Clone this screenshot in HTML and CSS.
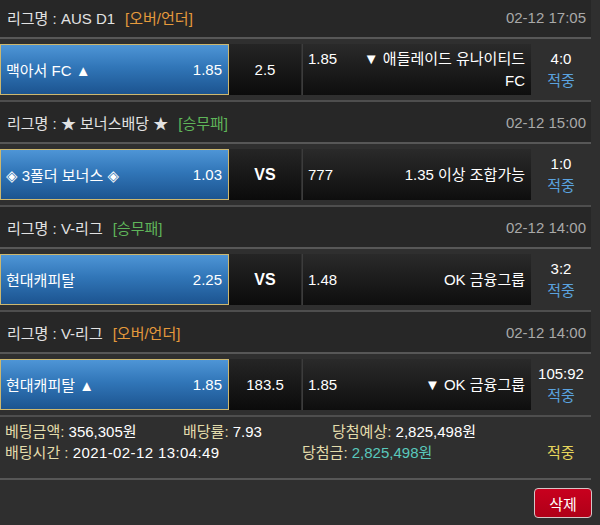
FILE: index.html
```html
<!DOCTYPE html>
<html lang="ko">
<head>
<meta charset="utf-8">
<title>베팅내역</title>
<link rel="stylesheet" href="styles.css">
</head>
<body>
<div class="slip">
  <div class="block">
    <div class="league"><span class="name">리그명 : AUS D1<span class="tag ou">[오버/언더]</span></span><span class="date">02-12 17:05</span></div>
    <div class="match">
      <div class="home"><span>맥아서 FC ▲</span><span>1.85</span></div>
      <div class="mid">2.5</div>
      <div class="away"><div class="away-in"><span class="odd">1.85</span><span class="team">▼ 애들레이드 유나이티드 FC</span></div></div>
      <div class="result"><span class="score">4:0</span><span class="hit">적중</span></div>
    </div>
  </div>
  <div class="block">
    <div class="league"><span class="name">리그명 : ★ 보너스배당 ★<span class="tag wdl">[승무패]</span></span><span class="date">02-12 15:00</span></div>
    <div class="match">
      <div class="home"><span>◈ 3폴더 보너스 ◈</span><span>1.03</span></div>
      <div class="mid vs">VS</div>
      <div class="away"><div class="away-in"><span class="odd">777</span><span class="team">1.35 이상 조합가능</span></div></div>
      <div class="result"><span class="score">1:0</span><span class="hit">적중</span></div>
    </div>
  </div>
  <div class="block">
    <div class="league"><span class="name">리그명 : V-리그<span class="tag wdl">[승무패]</span></span><span class="date">02-12 14:00</span></div>
    <div class="match">
      <div class="home"><span>현대캐피탈</span><span>2.25</span></div>
      <div class="mid vs">VS</div>
      <div class="away"><div class="away-in"><span class="odd">1.48</span><span class="team">OK 금융그룹</span></div></div>
      <div class="result"><span class="score">3:2</span><span class="hit">적중</span></div>
    </div>
  </div>
  <div class="block last">
    <div class="league"><span class="name">리그명 : V-리그<span class="tag ou">[오버/언더]</span></span><span class="date">02-12 14:00</span></div>
    <div class="match">
      <div class="home"><span>현대캐피탈 ▲</span><span>1.85</span></div>
      <div class="mid">183.5</div>
      <div class="away"><div class="away-in"><span class="odd">1.85</span><span class="team">▼ OK 금융그룹</span></div></div>
      <div class="result"><span class="score">105:92</span><span class="hit">적중</span></div>
    </div>
  </div>
  <div class="summary">
    <div class="line">
      <span class="c1"><span class="lbl">베팅금액:</span> 356,305원</span>
      <span class="c2"><span class="lbl">배당률:</span> 7.93</span>
      <span><span class="lbl">당첨예상:</span> 2,825,498원</span>
    </div>
    <div class="line">
      <span class="d1"><span class="lbl">배팅시간 :</span> <span class="dt">2021-02-12 13:04:49</span></span>
      <span class="d2"><span class="lbl">당첨금:</span> <span class="win">2,825,498원</span></span>
      <span class="status">적중</span>
    </div>
  </div>
  <div class="actions"><button class="del" type="button">삭제</button></div>
</div>
</body>
</html>
```

FILE: styles.css
```css
html, body {
  margin: 0;
  padding: 0;
  background: #2f2f2f;
}
body {
  font-family: "Liberation Sans", "Noto Sans CJK KR", "DejaVu Sans", sans-serif;
  font-size: 15px;
  color: #fff;
}
.slip {
  width: 591px;
  margin-top: -3px;
}
.league {
  height: 40px;
  background: #272727;
  border-bottom: 2px solid #575757;
  display: flex;
  align-items: center;
  justify-content: space-between;
  padding: 0 5px 0 7px;
  color: #e2e2e2;
}
.tag { margin-left: 10px; }
.tag.ou { color: #e59a3c; }
.tag.wdl { color: #5fb55a; }
.date { color: #a9a9a9; }
.match {
  display: flex;
  height: 51px;
  padding: 5px 0;
  border-bottom: 2px solid #4e4e4e;
}
.home {
  width: 229px;
  box-sizing: border-box;
  border: 1px solid #cdb76e;
  background: linear-gradient(#4e95d6, #3176b8 45%, #1c5490);
  display: flex;
  align-items: center;
  justify-content: space-between;
  padding: 0 6px 0 5px;
}
.mid {
  width: 72px;
  background: linear-gradient(#252525, #0b0b0b);
  display: flex;
  align-items: center;
  justify-content: center;
}
.mid.vs { font-weight: bold; font-size: 16px; }
.away {
  width: 229px;
  box-sizing: border-box;
  margin-left: 1px;
  border-left: 1px solid #3c3c3c;
  background: linear-gradient(#2a2a2a, #0e0e0e);
  display: flex;
  align-items: center;
  padding: 0 6px 0 5px;
}
.away-in {
  flex: 1;
  display: flex;
  justify-content: space-between;
  align-items: flex-start;
  line-height: 22px;
}
.team {
  max-width: 178px;
  text-align: right;
}
.result {
  flex: 1;
  display: flex;
  flex-direction: column;
  align-items: center;
  justify-content: center;
  line-height: 22px;
}
.hit { color: #5aa2df; }
.summary {
  padding: 4px 0 15px 5px;
  border-bottom: 2px solid #575757;
  line-height: 21px;
}
.line { display: flex; }
.lbl { color: #e3dcab; }
.c1 { width: 178px; }
.c2 { width: 149px; }
.d1 { width: 297px; }
.d2 { width: 245px; }
.dt { letter-spacing: 0.4px; }
.win { color: #5ac8bc; }
.status { color: #e6d65c; }
.actions {
  display: flex;
  justify-content: flex-end;
  padding: 8px 0;
  margin-right: -1px;
}
.del {
  width: 58px;
  height: 30px;
  border: 1px solid #d6c4c6;
  border-radius: 4px;
  background: linear-gradient(#c8001e, #b00018);
  color: #fff;
  font-family: inherit;
  font-size: 15px;
  padding: 0;
}
```
